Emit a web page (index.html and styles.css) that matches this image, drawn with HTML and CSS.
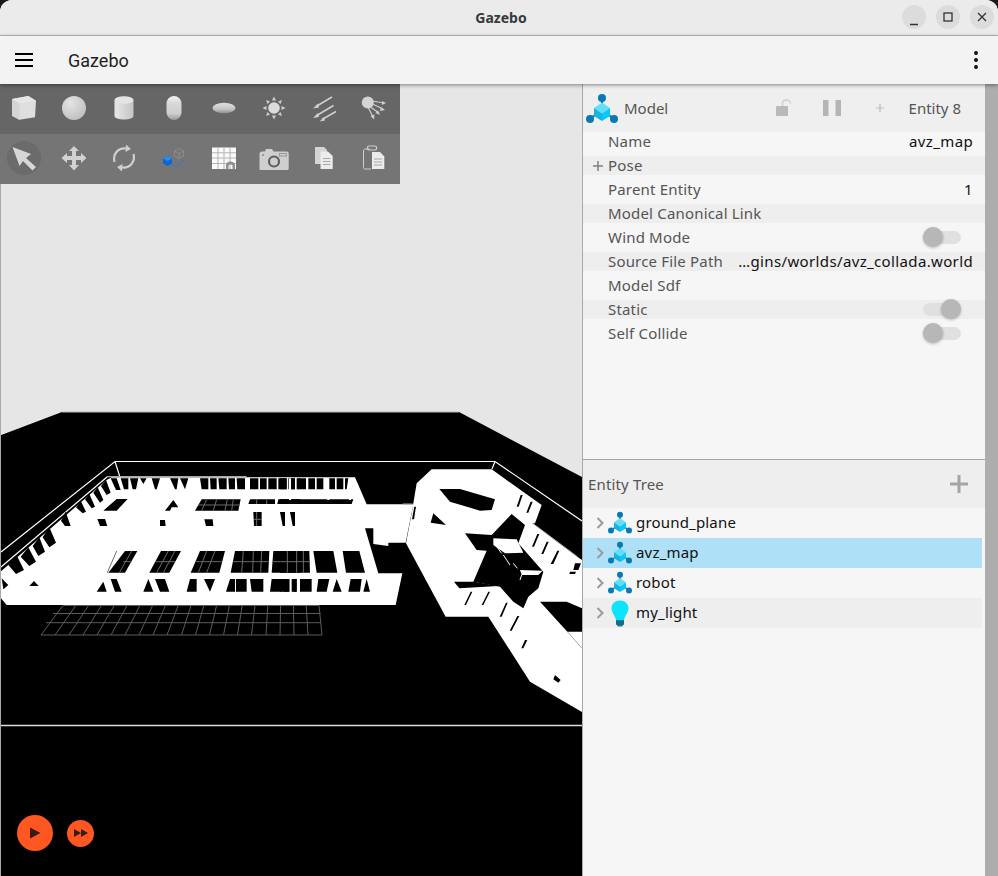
FILE: index.html
```html
<!DOCTYPE html>
<html lang="en">
<head>
<meta charset="utf-8">
<title>Gazebo</title>
<link rel="stylesheet" href="styles.css">
</head>
<body>
<svg class="defs" width="0" height="0" aria-hidden="true">
  <defs>
    <linearGradient id="gCyl" x1="0" x2="1" y1="0" y2="0"><stop offset="0" stop-color="#e8e8e8"/><stop offset="1" stop-color="#c4c4c4"/></linearGradient>
    <linearGradient id="gCap" x1="0" x2="0" y1="0" y2="1"><stop offset="0" stop-color="#f4f4f4"/><stop offset=".3" stop-color="#d8d8d8"/><stop offset=".72" stop-color="#cfcfcf"/><stop offset="1" stop-color="#9a9a9a"/></linearGradient>
    <linearGradient id="gEll" x1="0" x2="0" y1="0" y2="1"><stop offset="0" stop-color="#e2e2e2"/><stop offset=".6" stop-color="#c4c4c4"/><stop offset="1" stop-color="#8f8f8f"/></linearGradient>
    <radialGradient id="gSph" cx=".35" cy=".3" r=".8"><stop offset="0" stop-color="#e4e4e4"/><stop offset="1" stop-color="#bdbdbd"/></radialGradient>
    <symbol id="model" viewBox="0 0 34 32">
      <path d="M17 5V12M5 26L10 22M29 26L24 22" stroke="#0a78b4" stroke-width="2" fill="none"/>
      <circle cx="17" cy="5" r="4" fill="#0a78b4"/><circle cx="5" cy="26" r="4" fill="#0a78b4"/><circle cx="29" cy="26" r="4" fill="#0a78b4"/>
      <path d="M17 9.500L25 15L17 20.500L9 15Z" fill="#63def9"/>
      <path d="M9 15L17 20.500V28L9 23Z" fill="#17b4e2"/>
      <path d="M25 15L17 20.500V28L25 23Z" fill="#08c9fa"/>
    </symbol>
    <symbol id="bulb" viewBox="0 0 18 27">
      <path d="M9 0.500C13.800 0.500 17.500 4 17.500 8.500C17.500 12.500 14 15 13 20H5C4 15 0.500 12.500 0.500 8.500C0.500 4 4.200 0.500 9 0.500Z" fill="#0de4fb"/>
      <path d="M5 20H13V24L11 26.500H7L5 24Z" fill="#1a7f9c"/>
      <path d="M5 22H13M5 24H13" stroke="#0b5a78" stroke-width="1"/>
    </symbol>
    <symbol id="chev" viewBox="0 0 8 12"><path d="M1.500 1L6.500 6L1.500 11" fill="none" stroke="#9a9a9a" stroke-width="2"/></symbol>
  </defs>
</svg>
<div class="window">
  <header class="titlebar">
    <div class="title">Gazebo</div>
    <div class="winbtns">
      <button class="winbtn"><svg width="24" height="24" viewBox="0 0 24 24"><path d="M8 19.500H16" stroke="#333" stroke-width="1.300"/></svg></button>
      <button class="winbtn"><svg width="24" height="24" viewBox="0 0 24 24"><rect x="8" y="8" width="8" height="8" fill="none" stroke="#333" stroke-width="1.300"/></svg></button>
      <button class="winbtn"><svg width="24" height="24" viewBox="0 0 24 24"><path d="M8 8L16 16M16 8L8 16" stroke="#333" stroke-width="1.300"/></svg></button>
    </div>
  </header>
  <div class="appbar">
    <svg class="menu" width="18" height="14" viewBox="0 0 18 14"><path d="M0 1H18M0 7H18M0 13H18" stroke="#000" stroke-width="2"/></svg>
    <div class="apptitle">Gazebo</div>
    <svg class="more" width="4" height="18" viewBox="0 0 4 18"><circle cx="2" cy="2" r="2" fill="#111"/><circle cx="2" cy="9" r="2" fill="#111"/><circle cx="2" cy="16" r="2" fill="#111"/></svg>
  </div>
  <main class="main">
    <section class="viewport">
      <svg class="scene" viewBox="0 84 582 792" width="582" height="792">
        <rect x="0" y="84" width="582" height="792" fill="#e6e6e6"/>
        <path d="M0 435.500L62 412H459L582 477V876H0Z" fill="#000"/>
        <path d="M62 412H459" stroke="#bbb" stroke-width="1" fill="none"/>
        <path d="M1 552L115 461.500H495L582 521M115 461.500L124 490M495 461.500L492 469M1 567L107 477" stroke="#fff" stroke-width="1.200" fill="none"/>
        <path d="M0 725.500H582" stroke="#ddd" stroke-width="1.500"/>
        <path class="floor" d="M63 605.500H319M53 613.500H320.500M46 622.700H321M41 635H322M63 605.500L41 635M75.800 605.500L55 635M88.600 605.500L69 635M101.400 605.500L83 635M114.200 605.500L97 635M127 605.500L111 635M139.800 605.500L125 635M152.600 605.500L139 635M165.400 605.500L153 635M178.200 605.500L167 635M191 605.500L181.500 635M203.800 605.500L195.500 635M216.600 605.500L209.500 635M229.400 605.500L223.500 635M242.200 605.500L237.500 635M255 605.500L251.500 635M267.800 605.500L266 635M280.600 605.500L280 635M293.400 605.500L294 635M306.200 605.500L308 635M319 605.500L322 635"/>
        <g transform="translate(0 400) scale(.33333)">
          <path d="M3 514L320 240L335 232H1065L1100 313H1240L1217 428H1165V438L1120 432V385H1095L1135 520H1207L1187 615H20L3 595Z" fill="#fff"/>
          <path d="M320 230H740" stroke="#aaa" stroke-width="4"/>
          <g fill="#000">
            <path d="M25 495L50 466L72 510L48 522Z M62 470L85 442L108 485L88 498Z M98 438L118 412L135 455L115 468Z M128 412L148 382L168 428L148 442Z M183 362L197 335L212 378L195 378Z M228 322L242 302L258 335L248 340Z M255 298L268 282L285 320L275 325Z M280 278L293 262L310 300L300 308Z M303 258L318 240L332 278L320 285Z M332 235H350L362 270H348Z M5 535L15 545L25 555L10 568Z M88 558L102 543L116 558Z"/>
            <path d="M362 235H385L385 268H372Z M390 235H415L408 268H398Z M420 235H440L430 252Z M455 235H480L470 268H465Z M510 235H535L530 268H525Z M540 235H565L555 268Z M600 235H625V268H605Z M630 235H650V268H632Z M655 235H680V268H658Z M685 235H705V268H687Z M710 235H735V268H712Z M750 235H775V268H750Z M780 235H800V268H780Z M805 235H830V268H805Z M835 235H860V268H835Z M865 235H885V268H865Z M890 235H900V268H890Z"/>
            <path d="M310 332L350 297H383L350 332Z M495 332L520 300L535 322H515L510 332Z M585 332L605 298H722L715 332Z M745 312L750 298H825V312Z M832 312L835 298H900V312Z M292 357H315L322 378H300Z M480 360H495L497 378H480Z M613 358H638L640 378H618Z M760 336H785V378H762Z M870 336H885V378H878Z"/>
            <path d="M325 518L375 453H412L375 518Z M448 518L483 453H543L508 518Z M572 518L600 453H675L658 518Z M692 518L705 453H808L805 518Z M815 518L820 453H900V518Z"/>
            <path d="M290 575L310 545L320 575Z M332 537H350L365 575H345Z M430 575L445 537L460 575Z M465 537H495L508 575H480Z M560 575L570 537H590V575Z M612 537H645L630 575Z M678 575L690 537H705V575Z M708 537H740V575H708Z M750 537H790V575H755Z M810 575L815 537H845V575Z M850 537H868V575H850Z M880 537H890V575H880Z"/>
          </g>
          <path class="mull" d="M350 453L322 518M395 453L358 518M370 485H395 M505 453L470 518M525 453L490 518M465 485H525 M620 453L595 518M645 453L620 518M585 485H665 M730 453L725 518M760 453L758 518M785 453L782 518M700 485H805 M850 453L848 518M875 453L875 518M818 485H900 M620 298L605 332M650 298L640 332M682 298L675 332M700 298L695 332M595 315H720 M770 298V312M800 298V312M860 298V312M770 336V378M762 358H785"/>
          <g transform="translate(840 0)">
            <g fill="#000">
              <path d="M0 235H20V268H0Z M28 235H45V268H28Z M55 235H78V268H55Z M85 235H105V268H85Z M110 235H130V268H110Z M145 235H165V268H145Z M170 235H190V268H170Z M195 235H205L200 268H195Z"/>
              <path d="M0 298H220L215 312H0Z M0 336H15V378H8Z"/>
              <path d="M0 453H88L90 518H0Z M100 453H160L172 518H110Z M188 453H238L255 518H198Z"/>
              <path d="M0 537H28V575H0Z M35 537H50V575H35Z M60 537H95V575H60Z M115 537H148L140 575H110Z M158 575L170 537L185 575Z M205 575L212 537H245L240 575Z M250 575L260 537L270 575Z"/>
            </g>
            <path class="mull" d="M22 453V518M50 453V518M70 453V518M0 485H88"/>
            <path d="M30 235V300M145 235V300M210 235V300" stroke="#fff" stroke-width="6"/>
            <path d="M410 250L455 208H635L785 315L765 370H758L892 470L906 480V936L750 845L625 650H497L378 430L395 340Z" fill="#fff"/>
            <g fill="#000">
              <path d="M478 267H540L645 298L635 330L600 332L510 305Z"/>
              <path d="M460 340L498 375L452 368Z"/>
              <path d="M695 342L735 375L715 430L790 515L775 565L745 590L730 625L700 605L660 560L580 545L620 452L590 450L555 400L635 405Z"/>
              <path d="M522 545H582L655 558L538 565Z"/>
              <path d="M780 605H860L906 625V695H862Z"/>
              <path d="M722 285H728L716 320H710Z M752 305H758L745 338H739Z M772 402H778L762 440H756Z M800 425H806L790 462H784Z M832 452H838L820 492H812Z M885 490H903L895 510H880Z M870 515H888L885 522H868Z M572 575H577L558 615H553Z M625 575H630L610 615H605Z M678 608H683L665 650H659Z M712 648H718L695 692H689Z M735 720H742L730 745H724Z M825 825L842 840L835 848L820 838Z M738 568L755 575L745 590L733 582Z"/>
              <path d="M403 320L408 320L402 358L396 358Z"/>
            </g>
            <path d="M640 415L710 418L730 458L675 460L640 435Z M720 510L788 512L775 525L725 525Z" fill="#fff"/>
            <path d="M650 440L665 460M670 465L690 495M700 490L712 505M725 525L720 540" stroke="#fff" stroke-width="3" fill="none"/>
            <path d="M758 370L892 470M862 695L906 745M368 312H398" stroke="#aaa" stroke-width="3" fill="none"/>
          </g>
        </g>
      </svg>
      <div class="toolbar">
        <div class="toolrow toolrow-dark">
          <svg class="tool" viewBox="0 0 48 48"><path d="M12 15L28.300 12L36 16.700L35 33.300L19.300 35.700L12 31.700Z" fill="#dedede"/><path d="M12 15L28.300 12L36 16.700L19.500 19.500Z" fill="#e6e6e6"/><path d="M12 15L19.500 19.500L19.300 35.700L12 31.700Z" fill="#d4d4d4"/></svg>
          <svg class="tool" viewBox="0 0 48 48"><circle cx="24" cy="24" r="12" fill="url(#gSph)"/></svg>
          <svg class="tool" viewBox="0 0 48 48"><path d="M14.500 16V32C14.500 34 19 35.500 24 35.500S33.500 34 33.500 32V16Z" fill="url(#gCyl)"/><ellipse cx="24" cy="16" rx="9.500" ry="3.800" fill="#e4e4e4"/></svg>
          <svg class="tool" viewBox="0 0 48 48"><rect x="16.500" y="12" width="15" height="24" rx="7.500" fill="url(#gCap)"/></svg>
          <svg class="tool" viewBox="0 0 48 48"><ellipse cx="24" cy="24" rx="11.500" ry="5.300" fill="url(#gEll)"/></svg>
          <svg class="tool" viewBox="0 0 48 48"><circle cx="24" cy="24" r="5.800" fill="#dcdcdc"/><path d="M24 12.500L26 16.500H22Z M24 35.500L26 31.500H22Z M12.500 24L16.500 22V26Z M35.500 24L31.500 22V26Z M16 16L20 17.500L17.500 20Z M32 16L28 17.500L30.500 20Z M16 32L20 30.500L17.500 28Z M32 32L28 30.500L30.500 28Z" fill="#d0d0d0"/></svg>
          <svg class="tool" viewBox="0 0 48 48"><path d="M32 13L16 22.500M33.500 21.500L16 32M36 27.500L22 35.500" stroke="#cfcfcf" stroke-width="1.600" fill="none"/><path d="M13 24.500L18 19.500L19 23.500Z M13 34L18 29L19 33Z M19.500 37.500L24 33L25 36.500Z" fill="#cfcfcf"/></svg>
          <svg class="tool" viewBox="0 0 48 48"><circle cx="17.800" cy="18.500" r="6" fill="#d4d4d4"/><path d="M22 17L34 19M22.500 20L33 25M20.500 23L29 29M18.500 24L23 33" stroke="#cfcfcf" stroke-width="1.200" fill="none"/><path d="M36 19L32 17V21Z M35 26L31 23L30 27Z M30 31L28 26.500L25.500 29Z M24 35.500L24.500 30.500L20.500 32Z" fill="#cfcfcf"/></svg>
        </div>
        <div class="toolrow">
          <svg class="tool" viewBox="0 0 48 48"><circle cx="24" cy="24" r="17" fill="#6b6b6b"/><path d="M12.500 13L31 20L26 24L36 33L32.500 36.500L23 27L19.500 32Z" fill="#d6d6d6"/></svg>
          <svg class="tool" viewBox="0 0 48 48"><path d="M24 12L29 17H26V22H31V19L36.500 24L31 29V26H26V31H29L24 36.500L19 31H22V26H17V29L11.500 24L17 19V22H22V17H19Z" fill="#d2d2d2"/></svg>
          <svg class="tool" viewBox="0 0 48 48"><path d="M14.500 28C12.500 20.500 18 13.500 26 14.500M33.500 20C35.500 27.500 30 34.500 22 33.500" stroke="#cfcfcf" stroke-width="2.200" fill="none"/><path d="M26 10.500L31 15L25.500 18Z M22 37.500L17 33L22.500 30Z" fill="#cfcfcf"/></svg>
          <svg class="tool" viewBox="0 0 48 48"><path d="M24.500 17L29 14.500L33.500 17V22L29 24.500L24.500 22ZM24.500 17L29 19.500L33.500 17M29 19.500V24.500" fill="none" stroke="#8e8e8e" stroke-width=".9"/><path d="M21.500 31.500L26.700 32.500L34.300 25.700" stroke="#1c7be0" stroke-width="1" fill="none"/><path d="M13 24.500L17.500 22L22 24.500V29.500L17.500 32L13 29.500Z" fill="#0b66d6"/><path d="M13 24.500L17.500 22L22 24.500L17.500 27Z" fill="#2a8df0"/></svg>
          <svg class="tool" viewBox="0 0 48 48"><rect x="12" y="13.500" width="24" height="21.500" fill="#fafafa"/><path class="gridlines" d="M18 13.500V35M24 13.500V35M30 13.500V35M12 18.800H36M12 24H36M12 29.500H36"/><path d="M26 35.500V31C26 29 28 27.500 30.500 27.500S35 29 35 31V35.500H32.500V32C32.500 31 31.500 30.500 30.500 30.500S28.500 31 28.500 32V35.500Z" fill="#909090"/></svg>
          <svg class="tool" viewBox="0 0 48 48"><path d="M9.500 20C9.500 18.500 10.500 17.500 12 17.500H15L16 15H22L23.500 17.500H37C38 17.500 38.700 18.500 38.700 19.500V34.500C38.700 35.500 38 36 37 36H11C10 36 9.500 35.500 9.500 34.500Z" fill="#cfcfcf"/><circle cx="24" cy="27.500" r="5" fill="none" stroke="#5f5f5f" stroke-width="2.200"/><rect x="29.500" y="19.500" width="7" height="2.500" fill="none" stroke="#8a8a8a" stroke-width=".8"/><circle cx="13" cy="21" r="1" fill="#8a8a8a"/></svg>
          <svg class="tool" viewBox="0 0 48 48"><path d="M15 13H24L27 16V30H15Z" fill="#d4d4d4"/><path d="M20.500 17.500H28L32.700 22V35H20.500Z" fill="#ececec"/><path d="M23 24.500H30.500M23 27.500H30.500M23 30.500H30.500" stroke="#a8a8a8" stroke-width="1"/></svg>
          <svg class="tool" viewBox="0 0 48 48"><path d="M20 15H15C14 15 13.500 16 13.500 17V33.500C13.500 34.500 14 35 15 35H21" fill="none" stroke="#cfcfcf" stroke-width="1"/><rect x="17.500" y="12" width="9" height="4" rx="1.500" fill="none" stroke="#cfcfcf" stroke-width="1.200"/><path d="M22 18H30L34.300 22.500V35H22Z" fill="#ececec"/><path d="M24 25H32M24 28H32M24 31H32" stroke="#a8a8a8" stroke-width="1"/></svg>
        </div>
      </div>
      <div class="playback">
        <button class="play"><svg width="12" height="12" viewBox="0 0 12 12"><path d="M1 0.500L11.500 6L1 11.500Z" fill="#3d1a0e"/></svg></button>
        <button class="ff"><svg width="14" height="8" viewBox="0 0 14 8"><path d="M0 0L7 4L0 8ZM7 0L14 4L7 8Z" fill="#3d1a0e"/></svg></button>
      </div>
    </section>
    <aside class="panel">
      <section class="inspector">
        <div class="inspector-head">
          <svg class="model-big" width="34" height="32"><use href="#model"/></svg>
          <span class="head-label">Model</span>
          <span class="head-btn"><svg width="18" height="18" viewBox="0 0 18 18"><rect x="1" y="7" width="12" height="10" rx="1" fill="#b9b9b9"/><path d="M7.500 7V4C7.500 2 9.500 1 11.500 1S15.500 2.500 15.500 4.500" fill="none" stroke="#cfcfcf" stroke-width="1.400"/></svg></span>
          <span class="head-btn"><svg width="18" height="16" viewBox="0 0 18 16"><rect x="0" y="0" width="5.500" height="16" fill="#b5b5b5"/><rect x="12.500" y="0" width="5.500" height="16" fill="#b5b5b5"/></svg></span>
          <span class="head-btn"><svg width="8" height="8" viewBox="0 0 8 8"><path d="M4 0V8M0 4H8" stroke="#bdbdbd" stroke-width="1.200"/></svg></span>
          <span class="head-label entity-id">Entity 8</span>
        </div>
        <div class="rows">
          <div class="row"><span class="label">Name</span><span class="value">avz_map</span></div>
          <div class="row row-alt"><svg class="expand" width="10" height="10" viewBox="0 0 10 10"><path d="M5 0V10M0 5H10" stroke="#808080" stroke-width="1.500"/></svg><span class="label">Pose</span></div>
          <div class="row"><span class="label">Parent Entity</span><span class="value">1</span></div>
          <div class="row row-alt"><span class="label">Model Canonical Link</span></div>
          <div class="row"><span class="label">Wind Mode</span><span class="toggle"><span class="thumb"></span></span></div>
          <div class="row row-alt"><span class="label">Source File Path</span><span class="value">…gins/worlds/avz_collada.world</span></div>
          <div class="row"><span class="label">Model Sdf</span></div>
          <div class="row row-alt"><span class="label">Static</span><span class="toggle toggle-on"><span class="thumb"></span></span></div>
          <div class="row"><span class="label">Self Collide</span><span class="toggle"><span class="thumb"></span></span></div>
        </div>
      </section>
      <section class="tree">
        <div class="tree-head">
          <span class="tree-title">Entity Tree</span>
          <svg width="20" height="20" viewBox="0 0 20 20"><path d="M10 1V19M1 10H19" stroke="#a4a4a4" stroke-width="3"/></svg>
        </div>
        <div class="tree-row"><svg class="chev" width="8" height="12"><use href="#chev"/></svg><svg class="tree-icon" width="26" height="24"><use href="#model"/></svg><span class="tree-name">ground_plane</span></div>
        <div class="tree-row tree-row-sel"><svg class="chev" width="8" height="12"><use href="#chev"/></svg><svg class="tree-icon" width="26" height="24"><use href="#model"/></svg><span class="tree-name">avz_map</span></div>
        <div class="tree-row"><svg class="chev" width="8" height="12"><use href="#chev"/></svg><svg class="tree-icon" width="26" height="24"><use href="#model"/></svg><span class="tree-name">robot</span></div>
        <div class="tree-row tree-row-alt"><svg class="chev" width="8" height="12"><use href="#chev"/></svg><svg class="tree-icon" width="26" height="27"><use href="#bulb"/></svg><span class="tree-name">my_light</span></div>
      </section>
    </aside>
    <div class="rightbar"></div>
  </main>
</div>
</body>
</html>
```
FILE: styles.css
```css
* { box-sizing: border-box; }
html, body { margin: 0; padding: 0; background: #1a1a1a; }
body { width: 998px; height: 876px; overflow: hidden; font-family: "Noto Sans", sans-serif; }
.defs { display: block; height: 0; width: 0; }
.window { width: 998px; height: 876px; display: flex; flex-direction: column; overflow: hidden; border-radius: 12px 12px 0 0; background: #f5f5f5; }

.titlebar { height: 36px; flex: none; display: flex; align-items: center; justify-content: center; background: #ebebeb; border-bottom: 1px solid #bcbcbc; position: relative; }
.title { font-family: "Noto Sans", sans-serif; font-weight: 700; font-size: 14px; color: #3a3a3a; margin-left: 4px; }
.winbtns { position: absolute; right: 4px; top: 5px; display: flex; gap: 10px; }
.winbtn { width: 24px; height: 24px; border: 0; padding: 0; border-radius: 50%; background: #dcdcdc; }
.winbtn svg { display: block; }

.appbar { height: 48px; flex: none; display: flex; align-items: center; background: #f3f3f3; padding: 0 20px 0 15px; position: relative; z-index: 3; box-shadow: 0 1px 4px rgba(0,0,0,.45); }
.apptitle { font-family: Roboto, sans-serif; font-size: 18px; color: #1f1f1f; margin-left: 35px; flex: 1; }

.main { flex: 1; display: flex; min-height: 0; }
.viewport { width: 583px; flex: none; position: relative; border-right: 1px solid #a9a9a9; background: #000; overflow: hidden; }
.scene { display: block; }
.floor { fill: none; stroke: #5c5c5c; stroke-width: 1; }
.mull { fill: none; stroke: #6a6a6a; stroke-width: 3; }
.viewport::before { content: ""; position: absolute; left: 0; top: 0; bottom: 0; width: 1px; background: #a9a9a9; z-index: 1; }

.toolbar { position: absolute; left: 0; top: 0; width: 400px; z-index: 2; }
.toolrow { height: 50px; display: flex; gap: 2px; background: #757575; }
.toolrow-dark { background: #666; }
.tool { width: 48px; height: 48px; flex: none; display: block; }
.gridlines { fill: none; stroke: #b4b4b4; stroke-width: 1; }

.playback { position: absolute; left: 17px; bottom: 25px; display: flex; align-items: center; gap: 14px; z-index: 2; }
.play, .ff { border: 0; padding: 0; border-radius: 50%; background: #ff5722; display: flex; align-items: center; justify-content: center; }
.play { width: 36px; height: 36px; }
.ff { width: 27px; height: 27px; }

.panel { flex: 1; min-width: 0; display: flex; flex-direction: column; background: #f6f6f6; }
.inspector { height: 376px; flex: none; border-bottom: 1px solid #a5a5a5; }
.inspector-head { height: 48px; display: flex; align-items: center; background: #efefef; padding-left: 2px; color: #555; font-size: 15px; }
.model-big { flex: none; margin-top: 2px; }
.head-label { color: #555; }
.head-label:first-of-type { margin-left: 5px; margin-right: auto; }
.head-btn { width: 48px; height: 48px; display: flex; align-items: center; justify-content: center; }
.entity-id { margin-left: 5px; margin-right: 24px; }

.rows { display: flex; flex-direction: column; gap: 5px; }
.row { height: 19px; display: flex; align-items: center; justify-content: space-between; padding: 0 12px 0 25px; position: relative; font-size: 15px; line-height: 19px; }
.row-alt { background: #eeeeee; }
.label { color: #555; white-space: nowrap; letter-spacing: .18px; }
.value { color: #111; white-space: nowrap; letter-spacing: .36px; }
.expand { position: absolute; left: 10px; top: 5px; }
.toggle { width: 38px; height: 13px; border-radius: 7px; background: #e0e0e0; position: relative; margin-right: 12px; }
.thumb { position: absolute; left: 0; top: -4px; width: 20px; height: 20px; border-radius: 50%; background: #b7b7b7; box-shadow: 0 1px 3px rgba(0,0,0,.25); }
.toggle-on .thumb { left: 18px; }

.tree { flex: 1; }
.tree-head { height: 48px; display: flex; align-items: center; justify-content: space-between; background: #eeeeee; padding: 0 16px 0 5px; font-size: 15px; color: #555; letter-spacing: .15px; }
.tree-row { height: 30px; display: flex; align-items: center; padding-left: 13px; font-size: 15px; color: #111; margin-right: 3px; }
.tree-row-sel { background: #aee0f7; }
.tree-row-alt { background: #eeeeee; }
.chev { flex: none; }
.tree-icon { flex: none; margin-left: 3px; margin-right: 3px; }
.tree-name { white-space: nowrap; letter-spacing: .18px; padding-bottom: 2px; }

.rightbar { width: 13px; flex: none; background: #adadad; }
```
